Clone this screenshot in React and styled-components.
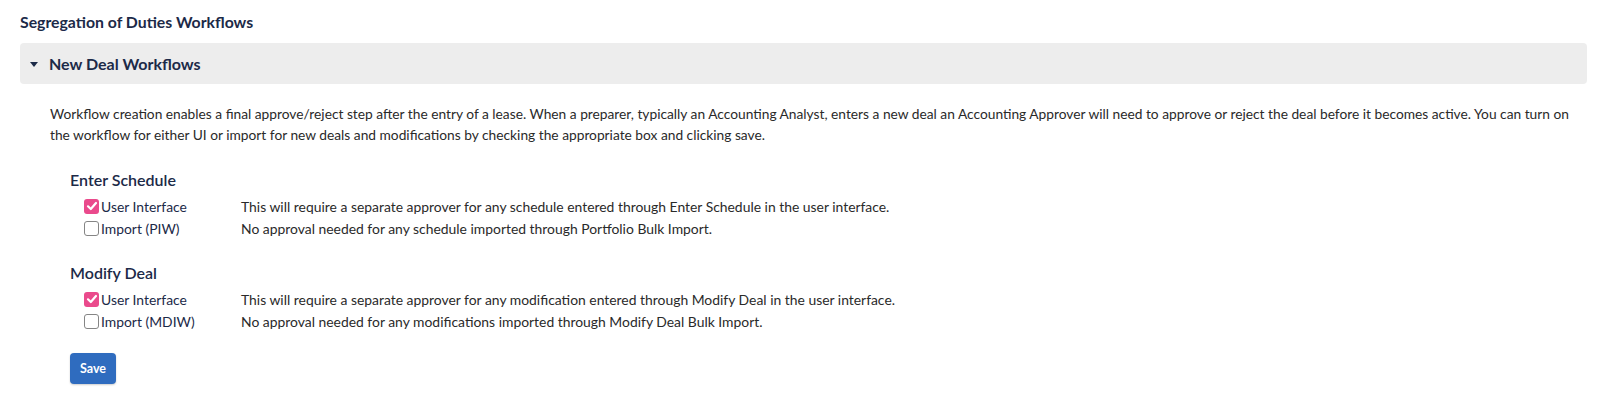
import React from "react";
import styled, { createGlobalStyle } from "styled-components";

const GlobalStyle = createGlobalStyle`
body {
  margin: 0;
  background: #fff;
  font-family: Lato, "Open Sans", Arial, sans-serif;
  color: #2a2a2a;
}
`

const Page = styled.div`
padding: 11px 19px 20px 20px;
`

const Title = styled.h2`
margin: 0;
font-size: 15.8px;
font-weight: 700;
line-height: 21px;
color: #1c2a48;
`

const AccordionHeader = styled.div`
margin-top: 11px;
height: 41px;
background: #ededed;
border-radius: 4px;
display: flex;
align-items: center;
padding-left: 10px;
gap: 11px;
`

const Caret = styled.span`
width: 0;
height: 0;
border-left: 4.5px solid transparent;
border-right: 4.5px solid transparent;
border-top: 5px solid #1c2a48;
margin-top: 1px;
`

const HeaderText = styled.span`
font-size: 16px;
font-weight: 700;
color: #1c2a48;
`

const Body = styled.div`
padding: 20px 12px 0 30px;
`

const Paragraph = styled.p`
margin: 0;
font-size: 13.75px;
line-height: 20.5px;
color: #2a2a2a;
`

const Section = styled.div`
margin-top: ${p => p.first ? "25px" : "24px"};
padding-left: 20px;
`

const SectionTitle = styled.h3`
margin: 0 0 5px;
font-size: 16px;
font-weight: 600;
line-height: 20px;
color: #1c2a48;
`

const Row = styled.div`
display: grid;
grid-template-columns: 157px 1fr;
height: 22px;
align-items: center;
padding-left: 14px;
font-size: 13.9px;
color: #2a2a2a;
`

const CheckLabel = styled.label`
display: flex;
align-items: center;
gap: 2px;
color: #1c2a48;
`

const Box = styled.span`
width: 15px;
height: 15px;
border-radius: 3px;
box-sizing: border-box;
display: flex;
align-items: center;
justify-content: center;
background: ${p => p.checked ? "#ea4a8c" : "#fff"};
border: ${p => p.checked ? "none" : "1px solid #858585"};
`

const SaveButton = styled.button`
margin: 21px 0 0 20px;
width: 46px;
height: 31px;
border: none;
border-radius: 4px;
background: #2f6cbf;
color: #fff;
font-family: Lato, Arial, sans-serif;
font-size: 12.5px;
font-weight: 700;
box-shadow: 0 1px 2px rgba(0, 0, 0, 0.2);
cursor: pointer;
`

function Check({ checked }) {
    return (
        <Box checked={checked}>
            {checked && (
                <svg width="12" height="12" viewBox="0 0 12 12">
                    <path d="M2 6.3 L4.8 9 L10 3" fill="none" stroke="#fff" strokeWidth="2.2" strokeLinecap="round" strokeLinejoin="round" />
                </svg>
            )}
        </Box>
    )
}

const sections = [
    {
        title: "Enter Schedule",
        rows: [
            { label: "User Interface", checked: true, text: "This will require a separate approver for any schedule entered through Enter Schedule in the user interface." },
            { label: "Import (PIW)", checked: false, text: "No approval needed for any schedule imported through Portfolio Bulk Import." },
        ],
    },
    {
        title: "Modify Deal",
        rows: [
            { label: "User Interface", checked: true, text: "This will require a separate approver for any modification entered through Modify Deal in the user interface." },
            { label: "Import (MDIW)", checked: false, text: "No approval needed for any modifications imported through Modify Deal Bulk Import." },
        ],
    },
]

export default function App() {
    return (
        <Page>
            <GlobalStyle />
            <Title>Segregation of Duties Workflows</Title>
            <AccordionHeader>
                <Caret />
                <HeaderText>New Deal Workflows</HeaderText>
            </AccordionHeader>
            <Body>
                <Paragraph>
                    Workflow creation enables a final approve/reject step after the entry of a lease. When a preparer, typically an Accounting Analyst, enters a new deal an Accounting Approver will need to approve or reject the deal before it becomes active. You can turn on the workflow for either UI or import for new deals and modifications by checking the appropriate box and clicking save.
                </Paragraph>
                {sections.map((s, i) => (
                    <Section key={s.title} first={i === 0}>
                        <SectionTitle>{s.title}</SectionTitle>
                        {s.rows.map(r => (
                            <Row key={r.label}>
                                <CheckLabel>
                                    <Check checked={r.checked} />
                                    {r.label}
                                </CheckLabel>
                                <span>{r.text}</span>
                            </Row>
                        ))}
                    </Section>
                ))}
                <SaveButton>Save</SaveButton>
            </Body>
        </Page>
    )
}
